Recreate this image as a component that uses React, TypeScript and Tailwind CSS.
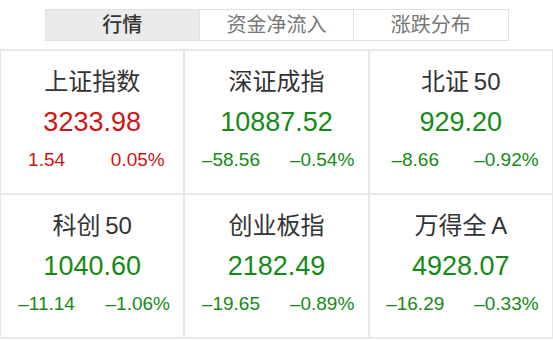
import React from "react";

type Item = { name: string; value: string; chg: string; pct: string; up: boolean };

const items: Item[] = [
  { name: "上证指数", value: "3233.98", chg: "1.54", pct: "0.05%", up: true },
  { name: "深证成指", value: "10887.52", chg: "–58.56", pct: "–0.54%", up: false },
  { name: "北证\u200950", value: "929.20", chg: "–8.66", pct: "–0.92%", up: false },
  { name: "科创\u200950", value: "1040.60", chg: "–11.14", pct: "–1.06%", up: false },
  { name: "创业板指", value: "2182.49", chg: "–19.65", pct: "–0.89%", up: false },
  { name: "万得全\u2009A", value: "4928.07", chg: "–16.29", pct: "–0.33%", up: false },
];

const font = { fontFamily: '"Liberation Sans", "Noto Sans CJK SC", sans-serif' };

export default function App() {
  return (
    <div className="w-[553px] h-[340px] bg-white overflow-hidden" style={font}>
      <div className="pt-[9px] flex justify-center">
        <div className="w-[464px] h-[32px] flex border border-[#e2e2e2]">
          <div className="flex-1 flex items-center justify-center bg-[#ebebeb] text-[#333] text-[20px] font-medium border-r border-[#e2e2e2]">
            行情
          </div>
          <div className="flex-1 flex items-center justify-center text-[#777] text-[20px] border-r border-[#e2e2e2]">
            资金净流入
          </div>
          <div className="flex-1 flex items-center justify-center text-[#777] text-[20px]">
            涨跌分布
          </div>
        </div>
      </div>
      <div className="mt-[8px] grid grid-cols-3 gap-[2px] bg-[#e8e8e8] p-[2px] pr-[1px] pl-[1px]">
        {items.map((it) => {
          const color = it.up ? "text-[#d01414]" : "text-[#168a16]";
          return (
            <div key={it.name} className="bg-white h-[142px] flex flex-col items-center pt-[16px]">
              <div className="h-[30px] leading-[30px] text-[24px] text-[#333]">{it.name}</div>
              <div className={`mt-[8px] h-[34px] leading-[34px] text-[27px] ${color}`}>{it.value}</div>
              <div className={`mt-[9px] w-full grid grid-cols-2 h-[24px] leading-[24px] text-[19px] ${color}`}>
                <div className="text-center">{it.chg}</div>
                <div className="text-center">{it.pct}</div>
              </div>
            </div>
          );
        })}
      </div>
    </div>
  );
}
